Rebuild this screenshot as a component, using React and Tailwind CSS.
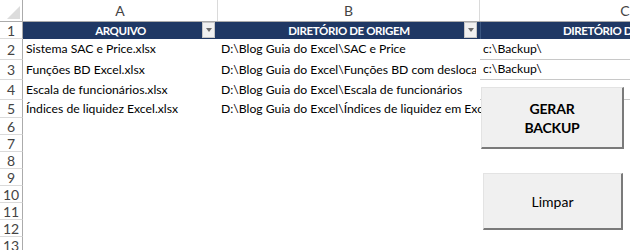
import React from "react";

const font = { fontFamily: "Lato, 'Noto Sans', sans-serif" };

function Dropdown() {
  return (
    <div className="absolute right-[3px] top-0 h-[16px] w-[13px] bg-[#f0f0f0] border border-[#c6c6c6] flex items-center justify-center">
      <div className="w-0 h-0 border-l-[3.5px] border-r-[3.5px] border-t-[4px] border-l-transparent border-r-transparent border-t-[#6b6b6b]" />
    </div>
  );
}

const rows = [
  { n: 2, h: "h-[21px]", a: "Sistema SAC e Price.xlsx", b: "D:\\Blog Guia do Excel\\SAC e Price", c: "c:\\Backup\\", cb: true },
  { n: 3, h: "h-[20px]", a: "Funções BD Excel.xlsx", b: "D:\\Blog Guia do Excel\\Funções BD com deslocamento", c: "c:\\Backup\\", cb: true, clip: true },
  { n: 4, h: "h-[20px]", a: "Escala de funcionários.xlsx", b: "D:\\Blog Guia do Excel\\Escala de funcionários", c: "", cb: true },
  { n: 5, h: "h-[18px]", a: "Índices de liquidez Excel.xlsx", b: "D:\\Blog Guia do Excel\\Índices de liquidez em Excel", c: "", cb: false },
];

const empty = [6, 7, 8, 9, 10, 11, 12, 13];

export default function App() {
  return (
    <div className="relative w-[630px] h-[250px] overflow-hidden bg-white text-black" style={font}>
      {/* column headers */}
      <div className="flex h-[22px] border-b border-[#ababab] text-[14px] text-[#444]">
        <div className="w-[23px] shrink-0 border-r border-[#ababab] relative">
          <div className="absolute right-[2px] bottom-[2px] w-0 h-0 border-b-[13px] border-l-[13px] border-b-[#dcdcdc] border-l-transparent" />
        </div>
        <div className="w-[195px] shrink-0 border-r border-[#dadada] flex items-center justify-center">A</div>
        <div className="w-[262px] shrink-0 border-r border-[#dadada] flex items-center justify-center">B</div>
        <div className="w-[290px] shrink-0 flex items-center justify-center">C</div>
      </div>

      {/* row 1 table header */}
      <div className="flex h-[17px]">
        <div className="w-[23px] shrink-0 border-r border-b border-[#ababab] border-b-[#dadada] text-[14px] text-[#444] flex items-center justify-center">1</div>
        <div className="w-[195px] shrink-0 bg-[#1f3864] text-white font-bold text-[11.5px] tracking-[-0.4px] flex items-center justify-center relative">
          ARQUIVO
          <Dropdown />
        </div>
        <div className="w-[262px] shrink-0 bg-[#1f3864] text-white font-bold text-[11.5px] tracking-[-0.4px] flex items-center justify-center relative">
          DIRETÓRIO DE ORIGEM
          <Dropdown />
        </div>
        <div className="w-[290px] shrink-0 bg-[#1f3864] border-l border-[#3a5680] text-white font-bold text-[11.5px] tracking-[-0.4px] flex items-center justify-center whitespace-nowrap">
          DIRETÓRIO DE DESTINO
        </div>
      </div>

      {rows.map((r) => (
        <div key={r.n} className={`flex ${r.h} text-[12.2px]`}>
          <div className="w-[23px] shrink-0 border-r border-b border-[#ababab] border-b-[#dadada] text-[14px] text-[#444] flex items-center justify-center">{r.n}</div>
          <div className="w-[195px] shrink-0 pl-[3px] flex items-center whitespace-nowrap">{r.a}</div>
          <div className="w-[262px] shrink-0 pl-[3px] flex items-center whitespace-nowrap">
            {r.clip ? <div className="w-[255px] overflow-hidden">{r.b}</div> : r.b}
          </div>
          <div className={`w-[290px] shrink-0 pl-[3px] flex items-center whitespace-nowrap ${r.cb ? "border-b border-[#c8c8c8]" : ""}`}>{r.c}</div>
        </div>
      ))}

      {empty.map((n) => (
        <div key={n} className="flex h-[17px] text-[14px]">
          <div className="w-[23px] shrink-0 border-r border-b border-[#ababab] border-b-[#dadada] text-[#444] flex items-center justify-center">{n}</div>
        </div>
      ))}

      {/* buttons */}
      <button className="absolute left-[481px] top-[87px] w-[143px] h-[62px] bg-[#f0f0f0] border-t border-l border-[#e3e3e3] border-r-2 border-b-2 border-r-[#7a7a7a] border-b-[#7a7a7a] font-bold text-[14px] tracking-[-0.2px] leading-[19px] text-black flex flex-col items-center justify-center">
        <span>GERAR</span>
        <span>BACKUP</span>
      </button>
      <button className="absolute left-[483px] top-[173px] w-[140px] h-[57px] bg-[#f0f0f0] border-t border-l border-[#e3e3e3] border-r-2 border-b-2 border-r-[#7a7a7a] border-b-[#7a7a7a] text-[14px] text-black flex items-center justify-center">
        Limpar
      </button>
    </div>
  );
}
